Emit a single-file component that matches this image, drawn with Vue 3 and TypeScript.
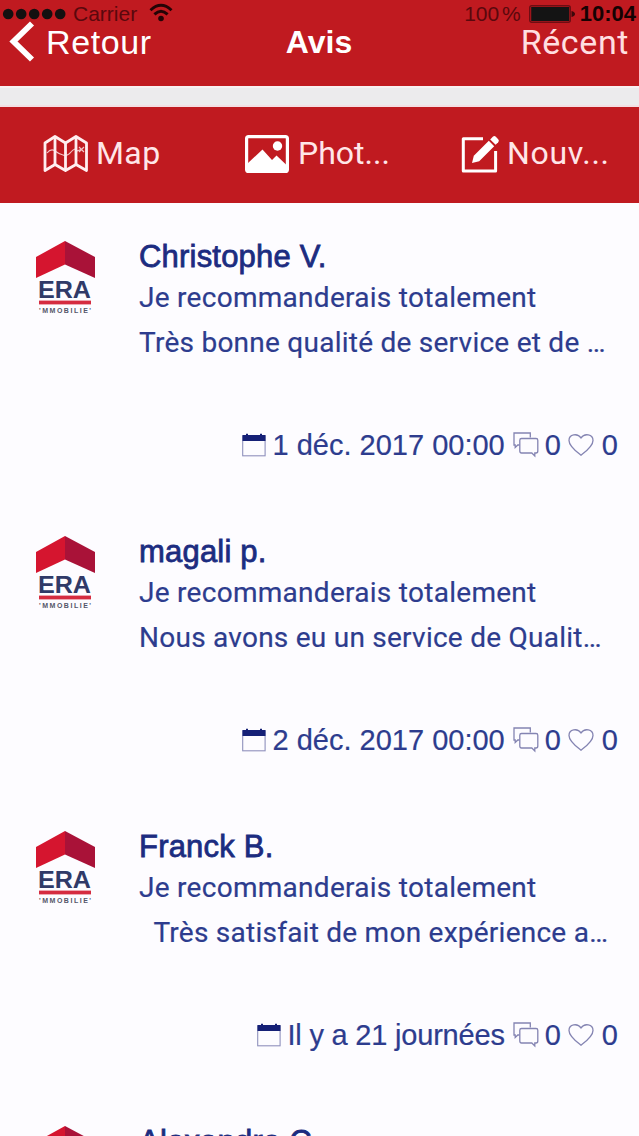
<script setup lang="ts">
interface Review {
  author: string
  verdict: string
  text: string
  date: string
  relative: boolean
  comments: number
  likes: number
}

const reviews: Review[] = [
  { author: 'Christophe V.', verdict: 'Je recommanderais totalement', text: 'Très bonne qualité de service et de …', date: '1 déc. 2017 00:00', relative: false, comments: 0, likes: 0 },
  { author: 'magali p.', verdict: 'Je recommanderais totalement', text: 'Nous avons eu un service de Qualit…', date: '2 déc. 2017 00:00', relative: false, comments: 0, likes: 0 },
  { author: 'Franck B.', verdict: 'Je recommanderais totalement', text: '\u00a0\u00a0Très satisfait de mon expérience a…', date: 'Il y a 21 journées', relative: true, comments: 0, likes: 0 },
  { author: 'Alexandre C.', verdict: '', text: '', date: '', relative: false, comments: 0, likes: 0 },
]
</script>

<template>
  <div class="screen">
    <header class="header">
      <div class="status">
        <svg class="dots" width="64" height="14" viewBox="0 0 64 14">
          <circle v-for="n in 5" :key="n" :cx="7.2 + (n - 1) * 13" cy="7" r="5.3" />
        </svg>
        <span class="carrier">Carrier</span>
        <svg class="wifi" width="24" height="20" viewBox="0 0 24 20">
          <path d="M1.5 7.2Q12 -2.6 22.5 7.2M5.4 11.4Q12 5 18.6 11.4" fill="none" stroke="#240406" stroke-width="2.9" />
          <circle cx="12" cy="15.5" r="2.8" fill="#240406" />
        </svg>
        <span class="percent">100 %</span>
        <svg class="battery" width="46" height="18" viewBox="0 0 46 18">
          <rect x="0.7" y="0.7" width="40.6" height="16.6" rx="2" fill="none" stroke="#6d0d13" stroke-width="1.4" />
          <rect x="2.2" y="2" width="38" height="14" fill="#141414" />
          <path d="M42.5 6Q46 7 46 9Q46 11 42.5 12Z" fill="#3d080b" />
        </svg>
        <span class="clock">10:04</span>
      </div>
      <nav class="nav">
        <div class="back">
          <svg width="26" height="42" viewBox="0 0 26 42">
            <path d="M23 2.5L4.5 20.5L23 38.5" fill="none" stroke="#fff" stroke-width="5.8" />
          </svg>
          <span>Retour</span>
        </div>
        <h1 class="title">Avis</h1>
        <span class="recent">Récent</span>
      </nav>
    </header>

    <div class="gap"></div>

    <div class="toolbar">
      <div class="tool map">
        <svg width="46" height="40" viewBox="0 0 46 40" fill="none" stroke="#ffeef0">
          <path d="M2 9L12 2.5L22.5 9L33 2.5L43.5 9V36.5L33 30.5L22.5 36.5L12 30.5L2 36.5Z" stroke-width="2.8" stroke-linejoin="round" />
          <path d="M12 3V30M22.5 9V36M33 3V30" stroke-width="2.8" />
          <path d="M4 19Q8 14 12 17T20 21Q24 23 28 18T34 17L39 15M36 13L41 18M41 13L36 18" stroke-width="1.2" opacity=".8" />
        </svg>
        <span class="label">Map</span>
      </div>
      <div class="tool photos">
        <svg width="44" height="38" viewBox="0 0 44 38">
          <rect x="1.6" y="1.6" width="40.8" height="34.8" rx="2" fill="none" stroke="#fff" stroke-width="3.2" />
          <circle cx="32.5" cy="11" r="4.7" fill="#fff" />
          <path d="M3 28L17.5 14.5L27 25L31.5 20.5L41 29.5V35H3Z" fill="#fff" />
        </svg>
        <span class="label">Phot...</span>
      </div>
      <div class="tool new">
        <svg width="40" height="40" viewBox="0 0 40 40">
          <path d="M22 4.8H2.3V37H34.6V17" fill="none" stroke="#fff" stroke-width="3" stroke-linejoin="round" />
          <path d="M11 29L12.8 21.8L27.8 6.8L33.2 12.2L18.2 27.2Z" fill="#fff" />
          <path d="M29.2 5.4L31.8 2.8Q33.3 1.4 34.8 2.8L37.2 5.2Q38.6 6.7 37.2 8.2L34.6 10.8Z" fill="#fff" />
        </svg>
        <span class="label">Nouv...</span>
      </div>
    </div>

    <main class="list">
      <article v-for="review in reviews" :key="review.author" class="review">
        <svg class="logo" width="62" height="76" viewBox="0 0 62 76">
          <path d="M1 17L30 1V24.5L1 38Z" fill="#d5152f" />
          <path d="M30 1L60 17V38L30 24.5Z" fill="#a91238" />
          <text x="3" y="57.8" textLength="53" lengthAdjust="spacingAndGlyphs" class="brand">ERA</text>
          <rect x="4" y="60.6" width="52" height="3.8" fill="#d52c40" />
          <text x="4" y="72.5" textLength="52" lengthAdjust="spacing" class="brand-sub">'MMOBILIE'</text>
        </svg>
        <div class="content">
          <h2 class="author">{{ review.author }}</h2>
          <p class="verdict">{{ review.verdict }}</p>
          <p class="text">{{ review.text }}</p>
          <div v-if="review.date" class="meta">
            <svg width="24" height="24" viewBox="0 0 24 24">
              <rect x="0.7" y="3" width="22.4" height="19.8" fill="none" stroke="#8f91bd" stroke-width="1.1" />
              <path d="M0.5 2H4V0.8H6V2H18V0.8H20V2H23.5V8H0.5Z" fill="#152076" />
            </svg>
            <span class="date" :class="{ relative: review.relative }">{{ review.date }}</span>
            <svg class="bubbles" width="26" height="26" viewBox="0 0 26 26" fill="none" stroke="#8484b2" stroke-width="1.3">
              <path d="M6.5 13H4.8L2.2 15.5V13H1V1H17.3V5.5" />
              <path d="M8.5 6.5H23Q24.8 6.5 24.8 8.3V19Q24.8 21 23 21H21.8V24L18.8 21H8.5Q6.8 21 6.8 19V8.3Q6.8 6.5 8.5 6.5Z" />
            </svg>
            <span class="count">{{ review.comments }}</span>
            <svg class="heart" width="26" height="24" viewBox="0 0 26 24" fill="none" stroke="#8484b2" stroke-width="1.3">
              <path d="M13 22.2C9 19 1 13.5 1 7.5C1 1.2 9.5 -0.2 13 5C16.5 -0.2 25 1.2 25 7.5C25 13.5 17 19 13 22.2Z" />
            </svg>
            <span class="count">{{ review.likes }}</span>
          </div>
        </div>
      </article>
    </main>
  </div>
</template>

<style>
html,
body {
  margin: 0;
  overflow: hidden;
}
</style>

<style scoped>
.screen {
  width: 639px;
  height: 1136px;
  overflow: hidden;
  background: #fdfcff;
  font-family: "Liberation Sans", Arial, sans-serif;
  color: #2d3c8e;
}
.header {
  position: relative;
  height: 86px;
  background: #c01a20;
}
.status {
  position: absolute;
  inset: 0 0 auto;
  height: 28px;
  display: flex;
  align-items: center;
  font-size: 21px;
  line-height: 28px;
  color: #5a080d;
  white-space: nowrap;
}
.dots {
  fill: #141010;
  width: 66px;
  height: 14px;
  flex: none;
}
.carrier {
  margin-left: 7px;
  width: 65px;
}
.wifi {
  margin-left: 11px;
  margin-top: -2px;
}
.percent {
  margin-left: auto;
  margin-right: 8px;
  word-spacing: -3px;
}
.battery {
  margin-right: 5px;
}
.clock {
  margin-right: 3px;
  font-size: 22px;
  font-weight: 700;
  color: #160203;
}
.nav {
  height: 86px;
  box-sizing: border-box;
  padding: 20px 10px 22px 9px;
  display: grid;
  grid-template-columns: 1fr auto 1fr;
  align-items: center;
  color: #fff;
  font-size: 34px;
  line-height: 44px;
}
.back {
  display: flex;
  align-items: center;
  gap: 11px;
  letter-spacing: 0.6px;
}
.title {
  margin: 0;
  font-size: 32px;
  font-weight: 700;
}
.recent {
  justify-self: end;
  font-family: Roboto, sans-serif;
  letter-spacing: 0.6px;
  color: #ffdfe1;
}
.gap {
  height: 21px;
  box-sizing: border-box;
  border-top: 2px solid #f8f0f2;
  border-bottom: 2px solid #f3dfe3;
  background: #ecebed;
}
.toolbar {
  height: 96px;
  box-sizing: border-box;
  padding-bottom: 2px;
  display: flex;
  align-items: center;
  background: #c01a20;
  color: #ffe6e8;
  font-family: Roboto, sans-serif;
  font-size: 32px;
  line-height: 40px;
}
.tool {
  display: flex;
  align-items: center;
  gap: 9px;
  white-space: nowrap;
}
.label {
  margin-bottom: 2px;
}
.map {
  width: 202px;
  padding-left: 43px;
  box-sizing: border-box;
  gap: 7px;
  letter-spacing: 0.4px;
}
.photos {
  width: 216px;
  margin-left: 43px;
}
.new {
  gap: 6px;
  letter-spacing: 0.7px;
}
.review {
  height: 295px;
  box-sizing: border-box;
  padding: 32px 21px 0 35px;
  display: flex;
}
.logo {
  flex: none;
  margin-top: 5px;
}
.brand {
  font: 700 24px "Liberation Sans", sans-serif;
  fill: #303a68;
}
.brand-sub {
  font: 700 7px "Liberation Sans", sans-serif;
  fill: #55576a;
}
.content {
  flex: 1;
  margin-left: 42px;
  min-width: 0;
}
.author {
  margin: 0;
  height: 42px;
  font-size: 31px;
  line-height: 44px;
  font-weight: 400;
  letter-spacing: 0.2px;
  color: #1c2c80;
  -webkit-text-stroke: 0.8px #1c2c80;
}
.verdict,
.text {
  margin: 0;
  height: 42px;
  font-family: Roboto, sans-serif;
  font-size: 28px;
  line-height: 42px;
  letter-spacing: 0.28px;
  white-space: nowrap;
  -webkit-text-stroke: 0.2px #2d3c8e;
}
.text {
  height: 48px;
  line-height: 48px;
  letter-spacing: 0.25px;
}
.meta {
  height: 40px;
  margin-top: 58px;
  display: flex;
  justify-content: flex-end;
  align-items: center;
  font-size: 29px;
  line-height: 40px;
  white-space: nowrap;
  -webkit-text-stroke: 0.2px #2d3c8e;
}
.date {
  margin: 0 8px 0 7px;
}
.relative {
  margin-left: 6px;
  letter-spacing: -0.2px;
}
.bubbles {
  margin-right: 6px;
}
.heart {
  margin: 0 8px 0 7px;
}
</style>
